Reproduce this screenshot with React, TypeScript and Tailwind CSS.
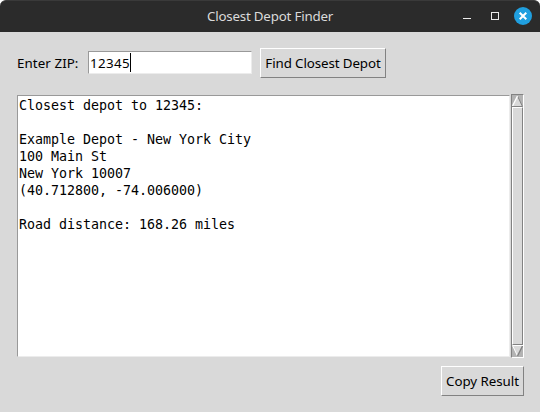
import React from 'react';

function TitleBar() {
  return (
    <header className="grid h-8 grid-cols-[1fr_auto_1fr] items-center rounded-t-[6px] border-t border-[#3a3a3a] bg-[#2b2b2b] text-[#dadada]">
      <span />
      <h1 className="text-[13.33px] leading-[30px] tracking-[-0.2px] whitespace-nowrap pb-px">Closest Depot Finder</h1>
      <div className="flex items-center justify-end pr-2 pb-px">
        <button aria-label="Minimize" className="mr-5 flex h-[18px] w-2 items-end pb-[6px]">
          <span className="h-px w-2 bg-[#ececec]" />
        </button>
        <button aria-label="Maximize" className="mr-[15px] h-2 w-2 border border-[#ececec]" />
        <button aria-label="Close" className="flex h-[18px] w-[18px] items-center justify-center rounded-full bg-[#209fdf]">
          <svg width="8" height="8" viewBox="0 0 8 8" stroke="#fff" strokeWidth="2">
            <path d="M.7.7l6.6 6.6M7.3.7L.7 7.3" />
          </svg>
        </button>
      </div>
    </header>
  );
}

function TkButton({ children, className }: { children: React.ReactNode; className: string }) {
  return (
    <button
      className={`h-[30px] border border-t-white border-r-[#828282] border-b-[#828282] border-l-white text-center leading-7 whitespace-nowrap ${className}`}
    >
      {children}
    </button>
  );
}

function Scrollbar() {
  return (
    <div className="flex h-[264px] w-[13px] flex-col border border-t-[#828282] border-r-white border-b-white border-l-[#828282] bg-[#b3b3b3]">
      <svg width="11" height="12" viewBox="0 0 11 12" fill="none">
        <path d="M5.5 1L10.5 11.5H.5z" fill="#d9d9d9" />
        <path d="M5.5 1l5 10.5H0" stroke="#828282" />
        <path d="M.5 11L5.5 1" stroke="#fff" strokeWidth="1.4" />
      </svg>
      <div className="flex-1 border border-t-white border-r-[#828282] border-b-[#828282] border-l-white bg-[#d9d9d9]" />
      <svg width="11" height="12" viewBox="0 0 11 12" fill="none">
        <path d="M.5 .5h10L5.5 11z" fill="#d9d9d9" />
        <path d="M5.5 11L.5 .5H11" stroke="#fff" />
        <path d="M10.5 1l-5 10" stroke="#828282" strokeWidth="1.4" />
      </svg>
    </div>
  );
}

const result = `Closest depot to 12345:

Example Depot - New York City
100 Main St
New York 10007
(40.712800, -74.006000)

Road distance: 168.26 miles`;

export default function App() {
  return (
    <div className="h-[412px] w-[540px] overflow-hidden bg-white font-['Noto_Sans',sans-serif] text-[13.33px] text-black">
      <TitleBar />
      <main className="flex h-[380px] flex-col bg-[#d9d9d9] pt-4 pr-4 pl-[17px]">
        <div className="flex h-[30px] items-start">
          <label className="w-[71px] leading-[30px] tracking-[0.08px] whitespace-nowrap">Enter ZIP:</label>
          <div className="mt-[3px] mr-2 flex h-[23px] w-[164px] items-center border border-t-[#999] border-r-[#ececec] border-b-[#ececec] border-l-[#999] bg-white pl-px">
            <span className="pt-px leading-[21px] tracking-[0.38px]">12345</span>
            <span className="h-[19px] w-px bg-black" />
          </div>
          <TkButton className="w-[126px] tracking-[-0.1px]">Find Closest Depot</TkButton>
        </div>
        <div className="mt-4 flex">
          <pre className="mt-px mr-px h-[262px] w-[493px] border border-t-[#999] border-r-[#ececec] border-b-[#ececec] border-l-[#999] bg-white pt-px pl-px font-['DejaVu_Sans_Mono',monospace] text-[13.33px] leading-[17px] tracking-[-0.025px]">
            {result}
          </pre>
          <Scrollbar />
        </div>
        <div className="mt-2 flex justify-end">
          <TkButton className="w-[83px] tracking-[-0.05px]">Copy Result</TkButton>
        </div>
      </main>
    </div>
  );
}
